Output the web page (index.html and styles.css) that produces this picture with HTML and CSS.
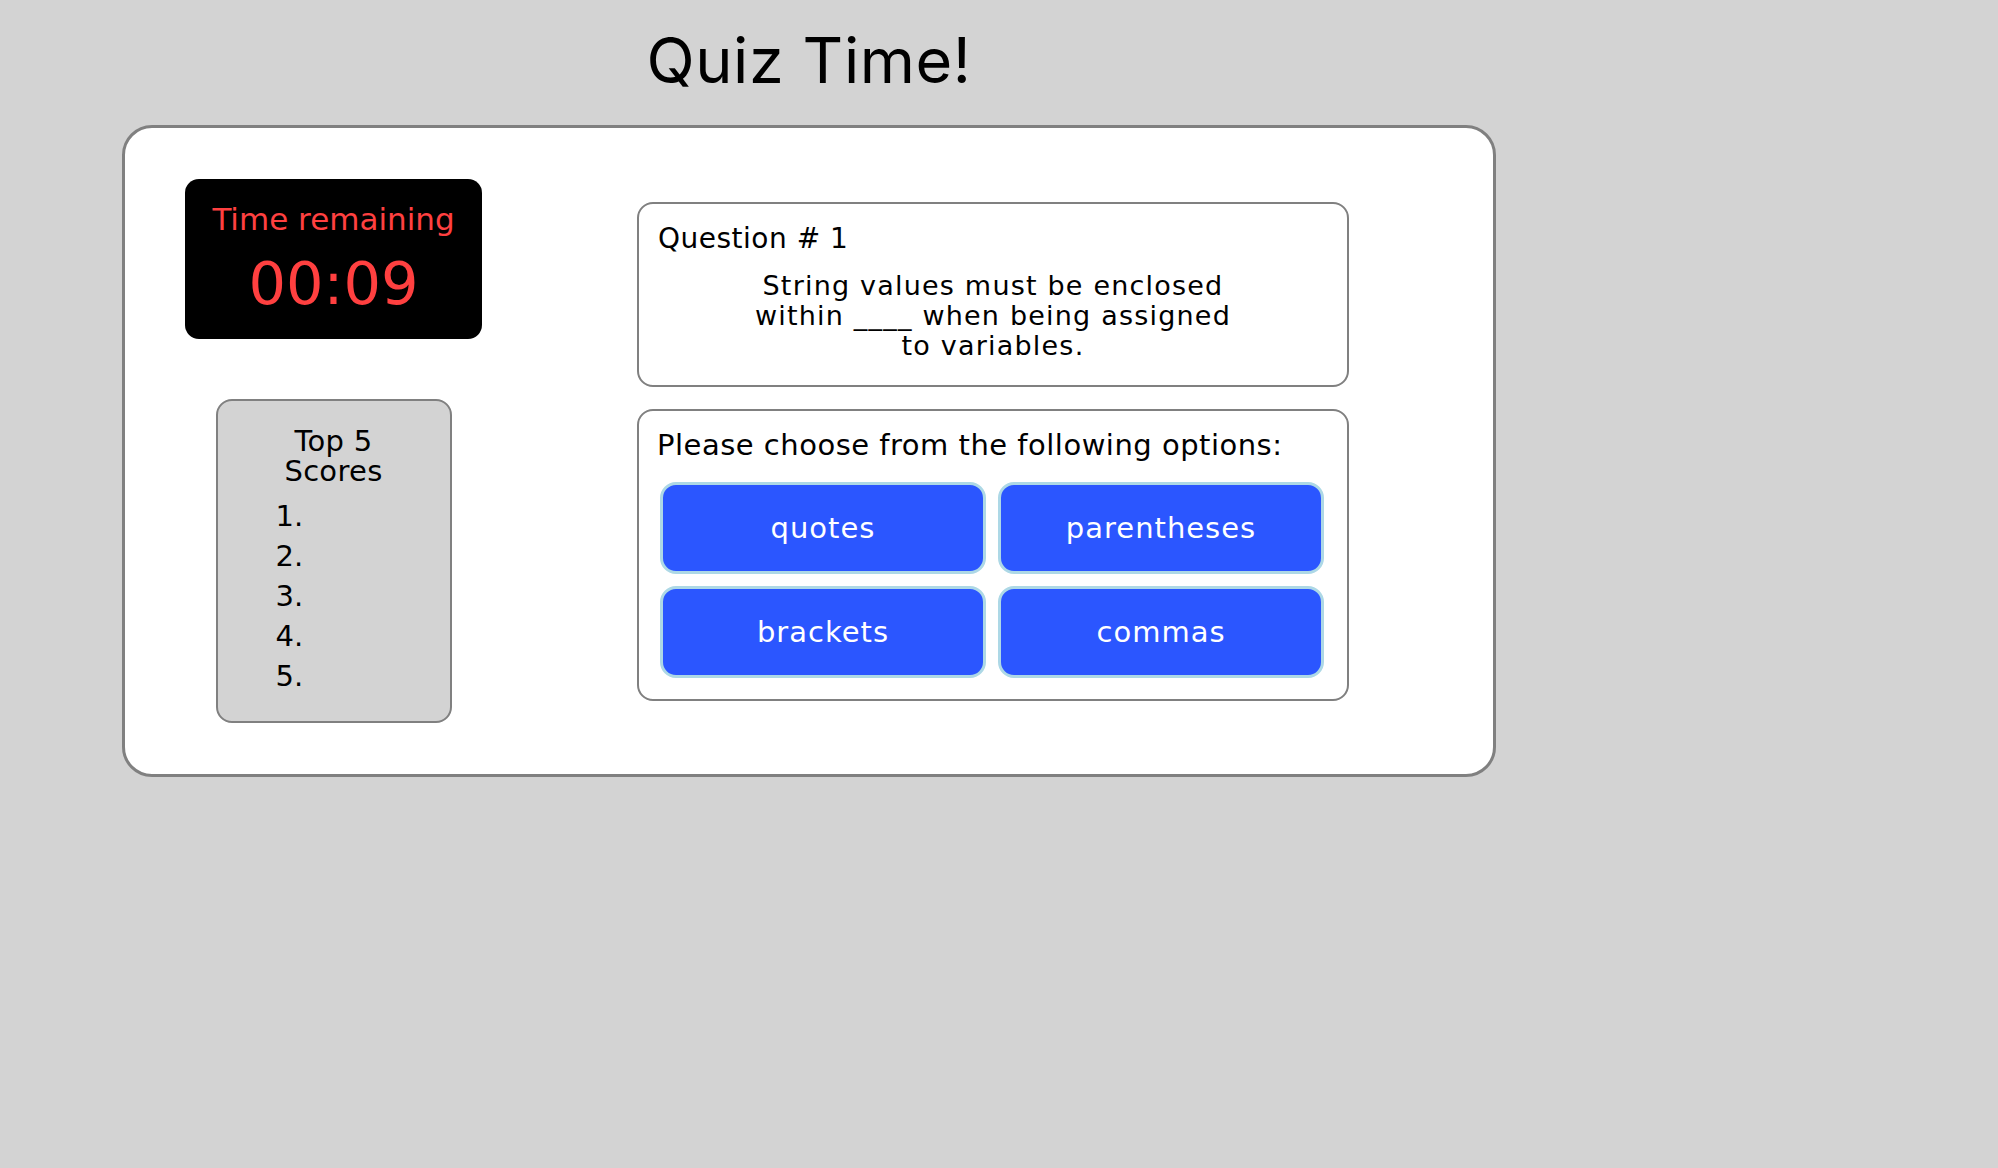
FILE: index.html
```html
<!DOCTYPE html>
<html lang="en">
<head>
<meta charset="utf-8">
<title>Quiz Time!</title>
<link rel="stylesheet" href="styles.css">
</head>
<body>
<div class="page">
  <h1 class="title">Quiz Time!</h1>
  <main class="card">
    <div class="side">
      <div class="timer">
        <div class="timer-label">Time remaining</div>
        <div class="timer-value">00:09</div>
      </div>
      <div class="scores">
        <div class="scores-title">Top 5<br>Scores</div>
        <ol class="scores-list">
          <li></li>
          <li></li>
          <li></li>
          <li></li>
          <li></li>
        </ol>
      </div>
    </div>
    <div class="quiz">
      <section class="question">
        <div class="question-num">Question # 1</div>
        <p class="question-text">String values must be enclosed<br>within ____ when being assigned<br>to variables.</p>
      </section>
      <section class="options">
        <div class="options-prompt">Please choose from the following options:</div>
        <div class="options-grid">
          <button class="opt">quotes</button>
          <button class="opt">parentheses</button>
          <button class="opt">brackets</button>
          <button class="opt">commas</button>
        </div>
      </section>
    </div>
  </main>
</div>
</body>
</html>
```

FILE: styles.css
```css
* { box-sizing: border-box; }

html, body {
  margin: 0;
  padding: 0;
}

body {
  background: #d3d3d3;
  font-family: "DejaVu Sans", "Open Sans", sans-serif;
  color: #000;
}

.page {
  width: 1374px;
  margin-left: 122px;
  padding-top: 22px;
}

.title {
  margin: 0 0 27px;
  font-family: "Inter", sans-serif;
  font-weight: 400;
  font-size: 63px;
  line-height: 76px;
  letter-spacing: 0.6px;
  text-align: center;
}

.card {
  display: flex;
  align-items: center;
  gap: 155px;
  background: #fff;
  border: 3px solid #808080;
  border-radius: 30px;
  padding: 51px 0 51px 60px;
}

.side {
  width: 297px;
  flex-shrink: 0;
  display: flex;
  flex-direction: column;
  align-items: center;
  gap: 60px;
}

.timer {
  width: 297px;
  height: 160px;
  background: #000;
  color: #ff4040;
  border-radius: 14px;
  padding-top: 21px;
  text-align: center;
}

.timer-label {
  font-size: 31px;
  line-height: 38px;
}

.timer-value {
  margin-top: 11px;
  font-size: 59px;
  line-height: 70px;
}

.scores {
  width: 236px;
  height: 324px;
  background: #d3d3d3;
  border: 2px solid #808080;
  border-radius: 16px;
  padding-top: 25px;
}

.scores-title {
  text-align: center;
  font-size: 29px;
  line-height: 30px;
  letter-spacing: 0.3px;
}

.scores-list {
  margin: 10px 0 0;
  padding-left: 58px;
  list-style: decimal inside;
  font-size: 29px;
  line-height: 40px;
}

.quiz {
  width: 712px;
  flex-shrink: 0;
  display: flex;
  flex-direction: column;
  gap: 22px;
}

.question {
  height: 185px;
  border: 2px solid #808080;
  border-radius: 16px;
  padding: 19px 19px 0;
}

.question-num {
  font-size: 28px;
  line-height: 32px;
  letter-spacing: 0.5px;
}

.question-text {
  margin: 16px 0 0;
  text-align: center;
  font-size: 27px;
  line-height: 30px;
  letter-spacing: 1.2px;
}

.options {
  height: 292px;
  border: 2px solid #808080;
  border-radius: 16px;
  padding: 18px 0 0 18px;
}

.options-prompt {
  font-size: 29px;
  line-height: 32px;
  letter-spacing: 0.5px;
}

.options-grid {
  margin-top: 21px;
  padding-left: 3px;
  display: grid;
  grid-template-columns: 326px 326px;
  grid-auto-rows: 92px;
  column-gap: 12px;
  row-gap: 12px;
}

.opt {
  background: #2b56ff;
  border: 3px solid #add8e6;
  border-radius: 16px;
  color: #fff;
  font-family: "DejaVu Sans", "Open Sans", sans-serif;
  font-size: 29px;
  letter-spacing: 1px;
  padding: 0;
}
```
